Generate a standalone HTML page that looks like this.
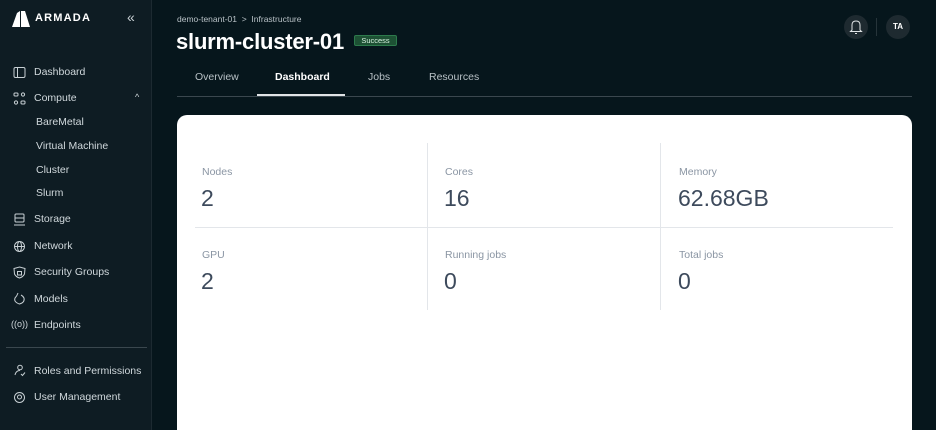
<!DOCTYPE html>
<html><head><meta charset="utf-8"><style>
*{margin:0;padding:0;box-sizing:border-box}
html,body{width:936px;height:430px;overflow:hidden}
body{background:#06161c;font-family:"Liberation Sans",sans-serif;position:relative}
.sb{position:absolute;left:0;top:0;width:152px;height:430px;background:#0e1c23;border-right:1px solid #1c2a31}
.t{position:absolute;color:#d0d8dc;font-size:10.5px;white-space:nowrap}
.ic{position:absolute;left:13px;width:13px;height:13px}
.card{position:absolute;left:177px;top:115px;width:735px;height:330px;background:#fff;border-radius:10px}
.lab{position:absolute;font-size:10.5px;color:#8a95a3}
.val{position:absolute;font-size:23px;color:#3d4a5c}
</style></head><body>
<div class="sb">
  <svg style="position:absolute;left:12px;top:11px" width="22" height="16" viewBox="0 0 22 16"><path d="M0 16 L5 2 L8 0 L8 16Z M9 0 L13 0 L18 16 L9 16Z" fill="#fff"/></svg>
  <div class="t" style="left:35px;top:12px;font-weight:bold;font-size:11px;color:#fff;letter-spacing:1.2px">ARMADA</div>
  <div class="t" style="left:127px;top:9px;font-size:14px;color:#c8d0d4">«</div>

  <svg class="ic" style="top:66px" viewBox="0 0 13 13"><rect x="1" y="1.5" width="11" height="10" rx="1.5" fill="none" stroke="#c8d0d4"/><line x1="4.5" y1="1.5" x2="4.5" y2="11.5" stroke="#c8d0d4"/></svg>
  <div class="t" style="left:34px;top:66px">Dashboard</div>
  <svg class="ic" style="top:92px" viewBox="0 0 13 13" fill="none" stroke="#c8d0d4"><rect x="1" y="1" width="4" height="3" rx="1"/><circle cx="10" cy="2.5" r="1.6"/><circle cx="3" cy="10.5" r="1.6"/><rect x="8" y="9" width="4" height="3" rx="1"/></svg>
  <div class="t" style="left:34px;top:92px">Compute</div>
  <div class="t" style="left:135px;top:92px;font-size:9px">^</div>
  <div class="t" style="left:36px;top:116px">BareMetal</div>
  <div class="t" style="left:36px;top:140px">Virtual Machine</div>
  <div class="t" style="left:36px;top:164px">Cluster</div>
  <div class="t" style="left:36px;top:187px">Slurm</div>
  <svg class="ic" style="top:213px" viewBox="0 0 13 13" fill="none" stroke="#c8d0d4"><rect x="2" y="1" width="9" height="8" rx="1"/><line x1="2" y1="5" x2="11" y2="5"/><line x1="1" y1="12" x2="12" y2="12"/></svg>
  <div class="t" style="left:34px;top:213px">Storage</div>
  <svg class="ic" style="top:240px" viewBox="0 0 13 13" fill="none" stroke="#c8d0d4"><circle cx="6.5" cy="6.5" r="5"/><ellipse cx="6.5" cy="6.5" rx="2" ry="5"/><line x1="1.5" y1="6.5" x2="11.5" y2="6.5"/></svg>
  <div class="t" style="left:34px;top:240px">Network</div>
  <svg class="ic" style="top:266px" viewBox="0 0 13 13" fill="none" stroke="#c8d0d4"><path d="M6.5 1 L12 2.5 L11.5 8 Q10 11 6.5 12 Q3 11 1.5 8 L1 2.5Z"/><rect x="4.5" y="5.5" width="4" height="3.5"/></svg>
  <div class="t" style="left:34px;top:266px">Security Groups</div>
  <svg class="ic" style="top:292px" viewBox="0 0 13 13" fill="none" stroke="#c8d0d4"><path d="M5 1 Q4 4 2 6 Q0.5 10 6.5 12 Q12 10.5 11 6 Q10 4 8 3"/></svg>
  <div class="t" style="left:34px;top:293px">Models</div>
  <div class="t" style="left:11px;top:319px;font-size:9px">((o))</div>
  <div class="t" style="left:34px;top:319px">Endpoints</div>
  <div style="position:absolute;left:6px;top:347px;width:141px;height:1px;background:#3a474e"></div>
  <svg class="ic" style="top:364px" viewBox="0 0 13 13" fill="none" stroke="#c8d0d4"><circle cx="7" cy="3.5" r="2.3"/><path d="M2 11 Q3 6.5 7 6.5 M8 10 L9.5 11.5 L12 8.5"/></svg>
  <div class="t" style="left:34px;top:365px">Roles and Permissions</div>
  <svg class="ic" style="top:391px" viewBox="0 0 13 13" fill="none" stroke="#c8d0d4"><circle cx="6.5" cy="6.5" r="5"/><circle cx="6.5" cy="6" r="2"/></svg>
  <div class="t" style="left:34px;top:391px">User Management</div>
</div>

<div class="t" style="left:177px;top:14px;font-size:8.5px;color:#b8c1c6">demo-tenant-01 &nbsp;&gt;&nbsp; Infrastructure</div>
<div class="t" style="left:176px;top:29px;font-size:22px;color:#fff;font-weight:bold;letter-spacing:-.2px">slurm-cluster-01</div>
<div style="position:absolute;left:354px;top:35px;width:43px;height:11px;background:#1d5134;border:1px solid #2d7a4c;border-radius:2px;color:#d8f0e0;font-size:7.5px;text-align:center;line-height:9px">Success</div>

<div class="t" style="left:195px;top:71px;color:#b8c1c6">Overview</div>
<div class="t" style="left:275px;top:71px;color:#fff;font-weight:bold">Dashboard</div>
<div class="t" style="left:368px;top:71px;color:#b8c1c6">Jobs</div>
<div class="t" style="left:429px;top:71px;color:#b8c1c6">Resources</div>
<div style="position:absolute;left:177px;top:96px;width:735px;height:1px;background:#3a474e"></div>
<div style="position:absolute;left:257px;top:94px;width:88px;height:2px;background:#e0e4e6"></div>

<div style="position:absolute;left:844px;top:15px;width:24px;height:24px;border-radius:50%;background:#1e2a30"></div>
<svg style="position:absolute;left:849px;top:19px" width="14" height="16" viewBox="0 0 14 16" fill="none" stroke="#e0e4e6" stroke-width="1"><path d="M3 11 L3 6 Q3 2 7 2 Q11 2 11 6 L11 11 L12.5 12.5 L1.5 12.5Z"/><path d="M6 14.5 L8 14.5"/></svg>
<div style="position:absolute;left:876px;top:18px;width:1px;height:18px;background:#26343a"></div>
<div style="position:absolute;left:886px;top:15px;width:24px;height:24px;border-radius:50%;background:#1e2a30;color:#fff;font-size:8px;font-weight:bold;text-align:center;line-height:24px">TA</div>

<div class="card">
  <div style="position:absolute;left:18px;top:112px;width:698px;height:1px;background:#e3e6ea"></div>
  <div style="position:absolute;left:250px;top:28px;width:1px;height:167px;background:#e3e6ea"></div>
  <div style="position:absolute;left:483px;top:28px;width:1px;height:167px;background:#e3e6ea"></div>
  <div class="lab" style="left:25px;top:51px">Nodes</div><div class="val" style="left:24px;top:70px">2</div>
  <div class="lab" style="left:268px;top:51px">Cores</div><div class="val" style="left:267px;top:70px">16</div>
  <div class="lab" style="left:502px;top:51px">Memory</div><div class="val" style="left:501px;top:70px">62.68GB</div>
  <div class="lab" style="left:25px;top:134px">GPU</div><div class="val" style="left:24px;top:153px">2</div>
  <div class="lab" style="left:268px;top:134px">Running jobs</div><div class="val" style="left:267px;top:153px">0</div>
  <div class="lab" style="left:502px;top:134px">Total jobs</div><div class="val" style="left:501px;top:153px">0</div>
</div>
</body></html>
